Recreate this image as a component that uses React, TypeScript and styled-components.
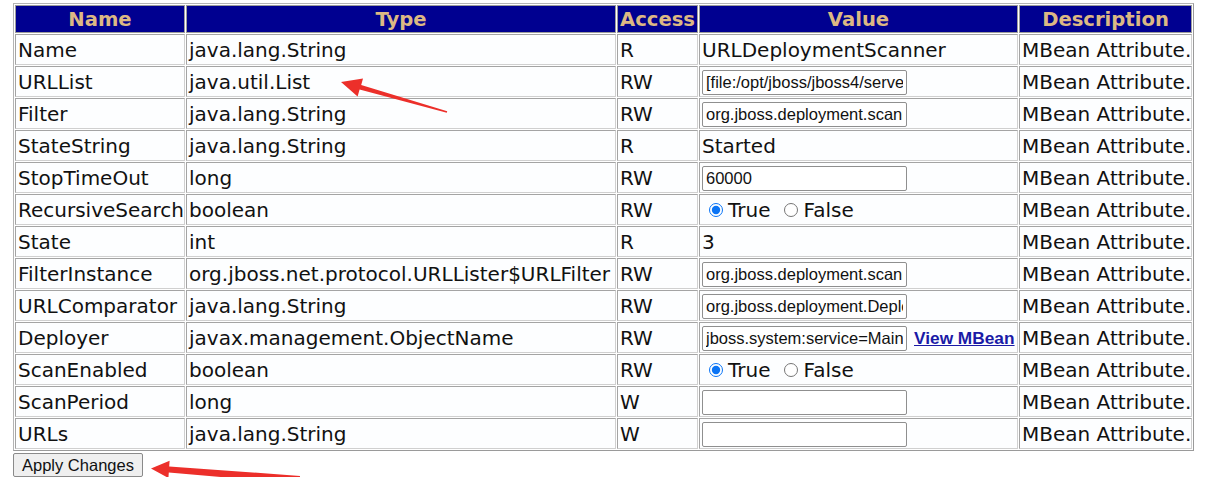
import React from 'react';
import styled, { createGlobalStyle } from 'styled-components';

type Kind = 'text' | 'input' | 'radio' | 'mbean';

interface Attr {
  name: string;
  type: string;
  access: string;
  kind: Kind;
  value?: string;
  checked?: boolean;
}

const ATTRS: Attr[] = [
  { name: 'Name', type: 'java.lang.String', access: 'R', kind: 'text', value: 'URLDeploymentScanner' },
  { name: 'URLList', type: 'java.util.List', access: 'RW', kind: 'input', value: '[file:/opt/jboss/jboss4/server/default/deploy/]' },
  { name: 'Filter', type: 'java.lang.String', access: 'RW', kind: 'input', value: 'org.jboss.deployment.scanner.DeploymentFilter' },
  { name: 'StateString', type: 'java.lang.String', access: 'R', kind: 'text', value: 'Started' },
  { name: 'StopTimeOut', type: 'long', access: 'RW', kind: 'input', value: '60000' },
  { name: 'RecursiveSearch', type: 'boolean', access: 'RW', kind: 'radio', checked: true },
  { name: 'State', type: 'int', access: 'R', kind: 'text', value: '3' },
  { name: 'FilterInstance', type: 'org.jboss.net.protocol.URLLister$URLFilter', access: 'RW', kind: 'input', value: 'org.jboss.deployment.scanner.DeploymentFilter@1c2d' },
  { name: 'URLComparator', type: 'java.lang.String', access: 'RW', kind: 'input', value: 'org.jboss.deployment.DeploymentSorter' },
  { name: 'Deployer', type: 'javax.management.ObjectName', access: 'RW', kind: 'mbean', value: 'jboss.system:service=MainDeployer' },
  { name: 'ScanEnabled', type: 'boolean', access: 'RW', kind: 'radio', checked: true },
  { name: 'ScanPeriod', type: 'long', access: 'W', kind: 'input', value: '' },
  { name: 'URLs', type: 'java.lang.String', access: 'W', kind: 'input', value: '' },
];

const COLUMNS = [
  { label: 'Name', width: 170 },
  { label: 'Type', width: 430 },
  { label: 'Access', width: 81 },
  { label: 'Value', width: 319 },
  { label: 'Description', width: 173 },
];

const GlobalStyle = createGlobalStyle`
  html, body {
    margin: 0;
    padding: 0;
    background: #ffffff;
  }
  body {
    font-family: "DejaVu Sans", Verdana, sans-serif;
    color: #111;
    overflow: hidden;
  }
`;

const Page = styled.div`
  position: relative;
  display: flex;
  flex-direction: column;
  align-items: flex-start;
  gap: 2px;
  padding: 3px 0 0 13px;
  width: 1218px;
  height: 477px;
  box-sizing: border-box;
  overflow: hidden;
`;

const AttrTable = styled.table`
  width: 1181px;
  table-layout: fixed;
  border-collapse: separate;
  border-spacing: 1px;
  border: 1px solid #b4b4b4;
  border-right-color: #9a9a9a;
  border-bottom-color: #9a9a9a;
  box-sizing: border-box;
`;

const HeadCell = styled.th<{ $w: number }>`
  width: ${({ $w }) => $w}px;
  height: 28px;
  box-sizing: border-box;
  padding: 0;
  background: #000090;
  border: 1px solid #9c9c9c;
  color: #dcb884;
  font-family: "DejaVu Sans", Verdana, sans-serif;
  font-weight: bold;
  font-size: 19.6px;
  text-align: center;
  vertical-align: middle;
  white-space: nowrap;
  overflow: hidden;
`;

const Cell = styled.td`
  height: 31px;
  box-sizing: border-box;
  padding: 0 1px 0 2px;
  border: 1px solid #a4a4a4;
  border-right-color: #d0d0d0;
  border-bottom-color: #d0d0d0;
  background: #fdfeff;
  font-size: 20px;
  line-height: 24px;
  vertical-align: middle;
  white-space: nowrap;
  overflow: visible;
`;

const ValueInput = styled.input`
  width: 205px;
  height: 25px;
  box-sizing: border-box;
  margin: 0;
  padding: 1px 3px;
  border: 1px solid #8f8f8f;
  border-radius: 2px;
  background: #fff;
  font-family: "Liberation Sans", Arial, sans-serif;
  font-size: 16.5px;
  color: #111;
  vertical-align: middle;
`;

const RadioLabel = styled.label`
  display: inline-flex;
  align-items: center;
`;

const Radio = styled.input<{ $first?: boolean }>`
  width: 14px;
  height: 14px;
  margin: 0 5px 0 ${({ $first }) => ($first ? '7px' : '14px')};
  accent-color: #0a74f5;
`;

const MBeanLink = styled.a`
  margin-left: 7px;
  font-family: "Liberation Sans", Arial, sans-serif;
  font-weight: bold;
  font-size: 17.3px;
  color: #1a1aa6;
  text-decoration: underline;
  vertical-align: middle;
`;

const ApplyButton = styled.button`
  height: 27px;
  padding: 1px 8px;
  margin: 0;
  border: 1px solid #8a8a8a;
  border-radius: 2px;
  background: #efefef;
  font-family: "Liberation Sans", Arial, sans-serif;
  font-size: 16.5px;
  color: #111;
`;

const Overlay = styled.svg`
  position: absolute;
  left: 0;
  top: 0;
  pointer-events: none;
`;

function ValueCell({ attr }: { attr: Attr }) {
  switch (attr.kind) {
    case 'input':
      return <ValueInput type="text" defaultValue={attr.value} />;
    case 'mbean':
      return (
        <>
          <ValueInput type="text" defaultValue={attr.value} />
          <MBeanLink href="#">View MBean</MBeanLink>
        </>
      );
    case 'radio':
      return (
        <>
          <RadioLabel>
            <Radio $first type="radio" name={attr.name} defaultChecked={attr.checked} />
            True
          </RadioLabel>
          <RadioLabel>
            <Radio type="radio" name={attr.name} defaultChecked={!attr.checked} />
            False
          </RadioLabel>
        </>
      );
    default:
      return <>{attr.value}</>;
  }
}

// red annotation arrows drawn over the screenshot
function Arrows() {
  return (
    <Overlay width="1218" height="477" viewBox="0 0 1218 477">
      <polygon
        fill="#ec2f2a"
        points="341,82 363,78.5 361.2,85 447.2,111.2 446.8,112.8 359.6,89.6 357.6,96.5"
      />
      <polygon
        fill="#ec2f2a"
        points="151,468.5 169.6,460.8 169.2,466.4 300,476 299.6,484 168.8,472.4 168.4,478"
      />
    </Overlay>
  );
}

export default function App() {
  return (
    <>
      <GlobalStyle />
      <Page>
        <AttrTable>
          <thead>
            <tr>
              {COLUMNS.map((c) => (
                <HeadCell key={c.label} $w={c.width}>
                  {c.label}
                </HeadCell>
              ))}
            </tr>
          </thead>
          <tbody>
            {ATTRS.map((a) => (
              <tr key={a.name}>
                <Cell>{a.name}</Cell>
                <Cell>{a.type}</Cell>
                <Cell>{a.access}</Cell>
                <Cell>
                  <ValueCell attr={a} />
                </Cell>
                <Cell>MBean Attribute.</Cell>
              </tr>
            ))}
          </tbody>
        </AttrTable>
        <ApplyButton type="button">Apply Changes</ApplyButton>
        <Arrows />
      </Page>
    </>
  );
}
